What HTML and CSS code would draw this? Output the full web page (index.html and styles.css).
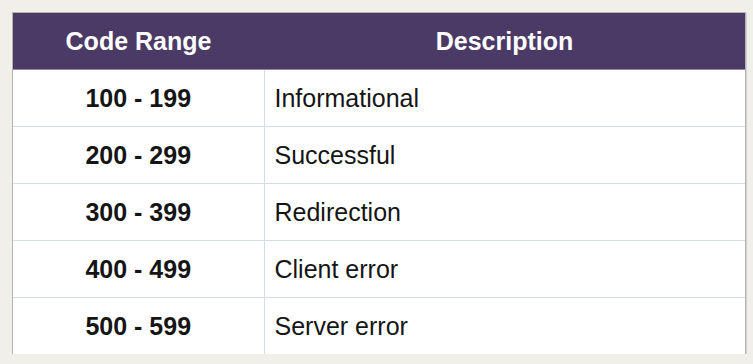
FILE: index.html
```html
<!DOCTYPE html>
<html lang="en">
<head>
<meta charset="utf-8">
<title>HTTP status code ranges</title>
<link rel="stylesheet" href="styles.css">
</head>
<body>
<div class="frame">
  <table class="codes">
    <thead>
      <tr><th class="col-range">Code Range</th><th class="col-desc">Description</th></tr>
    </thead>
    <tbody>
      <tr><td class="range">100 - 199</td><td class="desc">Informational</td></tr>
      <tr><td class="range">200 - 299</td><td class="desc">Successful</td></tr>
      <tr><td class="range">300 - 399</td><td class="desc">Redirection</td></tr>
      <tr><td class="range">400 - 499</td><td class="desc">Client error</td></tr>
      <tr><td class="range">500 - 599</td><td class="desc">Server error</td></tr>
    </tbody>
  </table>
</div>
</body>
</html>
```
FILE: styles.css
```css
html, body {
  margin: 0;
  padding: 0;
  background: #f1efea;
}

.frame {
  padding: 13px 0 0 13px;
}

.codes {
  width: 732px;
  border-collapse: collapse;
  background: #ffffff;
  font-family: "Liberation Sans", Arial, sans-serif;
  font-size: 25px;
  color: #151515;
  box-shadow: 0 0 0 1px #b4b4b4, 1px 1px 0 1px #d2d2d0;
}

.codes th {
  height: 56px;
  padding: 0;
  background: #4b3a66;
  color: #ffffff;
  font-weight: bold;
  text-align: center;
  border-bottom: 1px solid #8f86a3;
}

.col-range {
  width: 251px;
}

.codes td {
  height: 56px;
  padding: 0;
  border-top: 1px solid #d5dce6;
}

.codes tbody tr:first-child td {
  border-top: none;
}

.range {
  text-align: center;
  font-weight: bold;
  border-right: 1px solid #d5dce6;
}

.desc {
  text-align: left;
  padding-left: 10px !important;
}
```
